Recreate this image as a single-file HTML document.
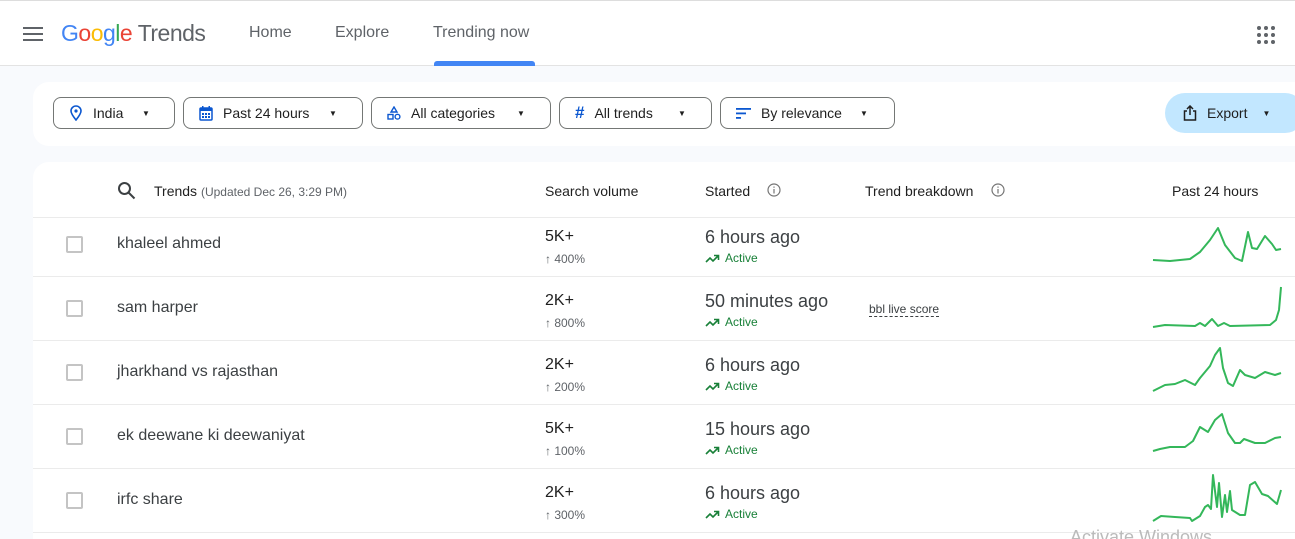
<!DOCTYPE html>
<html><head><meta charset="utf-8"><style>
*{box-sizing:border-box;margin:0;padding:0}
html,body{width:1295px;height:539px;overflow:hidden}
body{background:#f8fafd;font-family:"Liberation Sans",Arial,sans-serif;color:#1f1f1f;position:relative}
.hdr{position:absolute;left:0;top:0;width:1295px;height:66px;background:#fff;border-top:1px solid #ddd;border-bottom:1px solid #e3e3e3}
.a{position:absolute}
.nav{font-size:16px;color:#5f6368;top:23px}
.fcard{position:absolute;left:33px;top:82px;width:1262px;height:64px;background:#fff;border-radius:16px 0 0 16px}
.btn{position:absolute;top:97px;height:32px;border:1px solid #747775;border-radius:8px;font-size:14px;color:#1f1f1f;display:flex;align-items:center;padding-left:15px}
.btn svg{margin-right:10px}
.car{position:absolute;font-size:8px;top:11px}
.tcard{position:absolute;left:33px;top:162px;width:1262px;height:390px;background:#fff;border-radius:16px 0 0 0}
.th{position:absolute;top:183px;font-size:14px;color:#1f1f1f}
.line{position:absolute;left:33px;width:1262px;height:1px;background:#ebebeb}
.cb{position:absolute;left:66px;width:17px;height:17px;border:2px solid #c4c4c4;border-radius:2px}
.nm{position:absolute;left:117px;font-size:16px;color:#3c4043}
.vol{position:absolute;left:545px;font-size:16px;color:#1f1f1f}
.pct{position:absolute;left:545px;font-size:12px;color:#5f6368}
.st{position:absolute;left:705px;font-size:18px;color:#3c4043}
.act{position:absolute;left:705px;font-size:12px;color:#188038;display:flex;align-items:center}
</style></head><body>
<div class="hdr">
 <svg class="a" style="left:23px;top:26px" width="20" height="14"><rect y="0" width="20" height="2" fill="#5f6368"/><rect y="6" width="20" height="2" fill="#5f6368"/><rect y="12" width="20" height="2" fill="#5f6368"/></svg>
 <div class="a" style="left:61px;top:19px;font-size:23px;letter-spacing:-0.5px"><span style="color:#4285f4">G</span><span style="color:#ea4335">o</span><span style="color:#fbbc05">o</span><span style="color:#4285f4">g</span><span style="color:#34a853">l</span><span style="color:#ea4335">e</span> <span style="color:#5f6368">Trends</span></div>
 <div class="a nav" style="left:249px">Home</div>
 <div class="a nav" style="left:335px">Explore</div>
 <div class="a nav" style="left:433px">Trending now</div>
 <div class="a" style="left:434px;top:60px;width:101px;height:5px;background:#4285f4;border-radius:3px 3px 0 0"></div>
 <svg class="a" style="left:1257px;top:25px" width="18" height="18" fill="#5f6368"><circle cx="2" cy="2" r="2"/><circle cx="9" cy="2" r="2"/><circle cx="16" cy="2" r="2"/><circle cx="2" cy="9" r="2"/><circle cx="9" cy="9" r="2"/><circle cx="16" cy="9" r="2"/><circle cx="2" cy="16" r="2"/><circle cx="9" cy="16" r="2"/><circle cx="16" cy="16" r="2"/></svg>
</div>
<div class="fcard"></div>
<div class="btn" style="left:53px;width:122px"><svg width="14" height="16" viewBox="0 0 14 16"><path d="M7 15C3 10 2 8 2 6a5 5 0 0110 0c0 2-1 4-5 9z" fill="none" stroke="#0b57d0" stroke-width="1.6"/><circle cx="7" cy="6" r="1.6" fill="#0b57d0"/></svg>India<span class="car" style="left:88px">▼</span></div>
<div class="btn" style="left:183px;width:180px"><svg width="14" height="15" viewBox="0 0 14 15"><rect x="1" y="2" width="12" height="12" rx="1" fill="none" stroke="#0b57d0" stroke-width="1.5"/><rect x="1" y="2" width="12" height="3" fill="#0b57d0"/><g fill="#0b57d0"><rect x="3" y="7" width="2" height="2"/><rect x="6" y="7" width="2" height="2"/><rect x="9" y="7" width="2" height="2"/><rect x="3" y="10" width="2" height="2"/><rect x="6" y="10" width="2" height="2"/><rect x="9" y="10" width="2" height="2"/></g><rect x="3" y="0" width="1.5" height="3" fill="#0b57d0"/><rect x="9.5" y="0" width="1.5" height="3" fill="#0b57d0"/></svg>Past 24 hours<span class="car" style="left:145px">▼</span></div>
<div class="btn" style="left:371px;width:180px"><svg width="14" height="14" viewBox="0 0 14 14" fill="none" stroke="#0b57d0" stroke-width="1.4"><path d="M7 1l3 5H4z"/><rect x="1" y="8.5" width="5" height="4.5"/><circle cx="10.5" cy="10.7" r="2.4"/></svg>All categories<span class="car" style="left:145px">▼</span></div>
<div class="btn" style="left:559px;width:153px"><span style="color:#0b57d0;font-size:17px;margin-right:10px;font-weight:bold">#</span>All trends<span class="car" style="left:118px">▼</span></div>
<div class="btn" style="left:720px;width:175px"><svg width="15" height="11" viewBox="0 0 15 11" fill="#0b57d0"><rect width="15" height="1.8"/><rect y="4.5" width="10" height="1.8"/><rect y="9" width="5" height="1.8"/></svg>By relevance<span class="car" style="left:139px">▼</span></div>
<div class="a" style="left:1165px;top:93px;width:140px;height:40px;background:#c2e7ff;border-radius:20px;font-size:14px;display:flex;align-items:center;padding-left:18px"><svg width="14" height="16" viewBox="0 0 14 16" fill="none" stroke="#1f1f1f" stroke-width="1.5" style="margin-right:10px"><path d="M4 6H1.5v9h11V6H10M7 1v9M4 4l3-3 3 3"/></svg>Export<span style="font-size:8px;margin-left:15px">▼</span></div>
<div class="tcard"></div>
<svg class="a" style="left:117px;top:181px" width="19" height="19" fill="none" stroke="#3c4043" stroke-width="2"><circle cx="7.5" cy="7.5" r="5.5"/><path d="M11.5 11.5l6 6"/></svg>
<div class="th" style="left:154px">Trends <span style="font-size:12px;color:#5f6368">(Updated Dec 26, 3:29 PM)</span></div>
<div class="th" style="left:545px">Search volume</div>
<div class="th" style="left:705px">Started</div>
<svg class="a" style="left:767px;top:183px" width="14" height="14" fill="none" stroke="#757575" stroke-width="1.2"><circle cx="7" cy="7" r="6"/><path d="M7 6v4.5M7 3.5v1.2"/></svg>
<div class="th" style="left:865px">Trend breakdown</div>
<svg class="a" style="left:991px;top:183px" width="14" height="14" fill="none" stroke="#757575" stroke-width="1.2"><circle cx="7" cy="7" r="6"/><path d="M7 6v4.5M7 3.5v1.2"/></svg>
<div class="th" style="left:1172px">Past 24 hours</div>
<div class="line" style="top:217px"></div>
<div class="line" style="top:276px"></div>
<div class="line" style="top:340px"></div>
<div class="line" style="top:404px"></div>
<div class="line" style="top:468px"></div>
<div class="line" style="top:532px"></div>

<div class="cb" style="top:236px"></div><div class="nm" style="top:235px">khaleel ahmed</div>
<div class="vol" style="top:228px">5K+</div><div class="pct" style="top:252px">↑ 400%</div>
<div class="st" style="top:227px">6 hours ago</div><div class="act" style="top:251px"><svg width="15" height="9" style="margin-right:5px" fill="none" stroke="#188038" stroke-width="1.6"><path d="M1 8l4-4 3 3 5-5M9 1.5h4.5V6"/></svg>Active</div>

<div class="cb" style="top:300px"></div><div class="nm" style="top:299px">sam harper</div>
<div class="vol" style="top:292px">2K+</div><div class="pct" style="top:316px">↑ 800%</div>
<div class="st" style="top:291px">50 minutes ago</div><div class="act" style="top:315px"><svg width="15" height="9" style="margin-right:5px" fill="none" stroke="#188038" stroke-width="1.6"><path d="M1 8l4-4 3 3 5-5M9 1.5h4.5V6"/></svg>Active</div>
<div class="a" style="left:869px;top:302px;font-size:12px;color:#3c4043;border-bottom:1px dashed #3c4043;line-height:14px">bbl live score</div>

<div class="cb" style="top:364px"></div><div class="nm" style="top:363px">jharkhand vs rajasthan</div>
<div class="vol" style="top:356px">2K+</div><div class="pct" style="top:380px">↑ 200%</div>
<div class="st" style="top:355px">6 hours ago</div><div class="act" style="top:379px"><svg width="15" height="9" style="margin-right:5px" fill="none" stroke="#188038" stroke-width="1.6"><path d="M1 8l4-4 3 3 5-5M9 1.5h4.5V6"/></svg>Active</div>

<div class="cb" style="top:428px"></div><div class="nm" style="top:427px">ek deewane ki deewaniyat</div>
<div class="vol" style="top:420px">5K+</div><div class="pct" style="top:444px">↑ 100%</div>
<div class="st" style="top:419px">15 hours ago</div><div class="act" style="top:443px"><svg width="15" height="9" style="margin-right:5px" fill="none" stroke="#188038" stroke-width="1.6"><path d="M1 8l4-4 3 3 5-5M9 1.5h4.5V6"/></svg>Active</div>

<div class="cb" style="top:492px"></div><div class="nm" style="top:491px">irfc share</div>
<div class="vol" style="top:484px">2K+</div><div class="pct" style="top:508px">↑ 300%</div>
<div class="st" style="top:483px">6 hours ago</div><div class="act" style="top:507px"><svg width="15" height="9" style="margin-right:5px" fill="none" stroke="#188038" stroke-width="1.6"><path d="M1 8l4-4 3 3 5-5M9 1.5h4.5V6"/></svg>Active</div>

<svg class="a" style="left:0;top:0" width="1295" height="539" fill="none" stroke="#34b75a" stroke-width="2" stroke-linejoin="round">
<polyline points="1153,260 1170,261 1190,259 1200,252 1210,240 1218,228 1225,245 1235,258 1242,261 1248,232 1252,248 1257,249 1265,236 1272,244 1276,250 1281,249"/>
<polyline points="1153,327 1165,325 1195,326 1200,323 1205,326 1212,319 1218,326 1224,323 1230,326 1270,325 1276,320 1279,310 1281,287"/>
<polyline points="1153,391 1165,385 1175,384 1185,380 1195,385 1200,378 1210,366 1215,355 1220,348 1223,368 1228,383 1233,386 1240,370 1245,375 1255,378 1265,372 1275,375 1281,373"/>
<polyline points="1153,451 1160,449 1170,447 1185,447 1193,441 1200,427 1208,432 1215,420 1222,414 1228,433 1235,443 1240,443 1244,439 1255,443 1265,443 1275,438 1281,437"/>
<polyline points="1153,521 1161,516 1175,517 1190,518 1192,521 1200,516 1205,507 1208,505 1211,509 1213,475 1217,507 1219,483 1222,517 1225,495 1227,512 1230,491 1232,510 1240,515 1245,515 1250,485 1255,482 1262,494 1268,496 1277,504 1281,490"/>
</svg>
<div class="a" style="left:1070px;top:527px;font-size:18px;color:#bbb">Activate Windows</div>
</body></html>
